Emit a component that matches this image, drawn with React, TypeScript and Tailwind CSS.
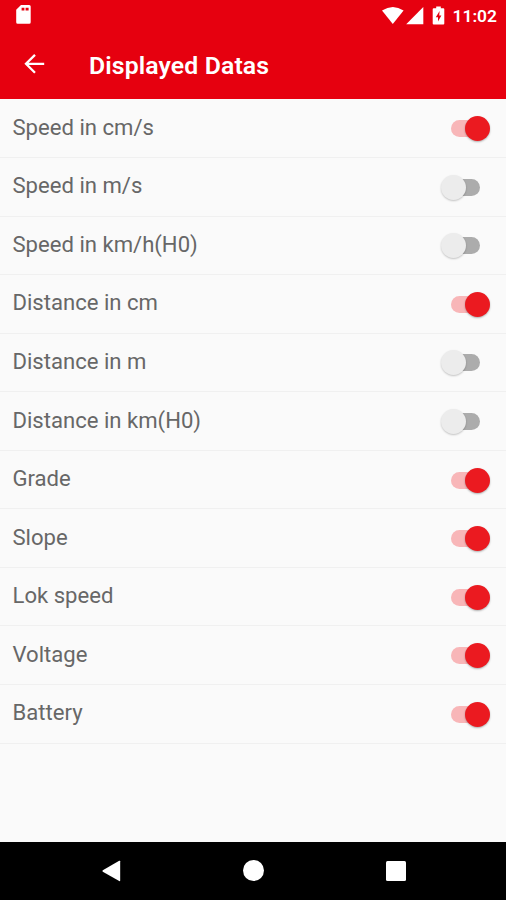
const rows: { label: string; on: boolean }[] = [
  { label: 'Speed in cm/s', on: true },
  { label: 'Speed in m/s', on: false },
  { label: 'Speed in km/h(H0)', on: false },
  { label: 'Distance in cm', on: true },
  { label: 'Distance in m', on: false },
  { label: 'Distance in km(H0)', on: false },
  { label: 'Grade', on: true },
  { label: 'Slope', on: true },
  { label: 'Lok speed', on: true },
  { label: 'Voltage', on: true },
  { label: 'Battery', on: true },
];

function Toggle({ on }: { on: boolean }) {
  return (
    <button role="switch" aria-checked={on} className="relative mt-px h-[25px] w-[50px] shrink-0">
      <span className={`absolute top-[4px] left-[11px] h-[17px] w-[28.5px] rounded-full ${on ? 'bg-[#f8b6b8]' : 'bg-[#acacac]'}`} />
      <span
        className={`absolute top-0 size-[25px] rounded-full ${
          on
            ? 'left-[25px] bg-[#eb1a20] shadow-[0_1px_2px_rgba(0,0,0,0.3)]'
            : 'left-px bg-[#ececec] shadow-[0_1px_2px_rgba(0,0,0,0.22)]'
        }`}
      />
    </button>
  );
}

function StatusBar() {
  return (
    <div className="flex h-[30px] items-center justify-between pt-[2px] pr-[9px] pl-[16px]">
      <svg width="15" height="19" viewBox="0 0 15 19" fill="#fff" className="-mt-[3px]">
        <path fillRule="evenodd" d="M5 0H13.2Q14.7 0 14.7 1.5V17.3Q14.7 18.8 13.2 18.8H1.7Q.2 18.8 .2 17.3V4.8ZM5.6 2.7V5.5H8.4V2.7ZM9.6 2.7V5.5H12.6V2.7Z" />
      </svg>
      <div className="flex items-center">
        <svg width="71" height="20" viewBox="0 0 71 20" className="-mt-px" fill="#fff">
          <path d="M0 4.4Q11 -2.6 21.6 4.4L10.8 17.9Z" />
          <path d="M41.3 .9V18.3H24.2Z" />
          <path fillRule="evenodd" d="M54.2 .4H58.8V2.2H61.3Q62.3 2.2 62.3 3.2V17.6Q62.3 18.6 61.3 18.6H51.7Q50.7 18.6 50.7 17.6V3.2Q50.7 2.2 51.7 2.2H54.2ZM57.6 5L53.8 11.2H56V15.6L59.4 9.5H57.2Z" />
        </svg>
        <span className="text-[17.4px] leading-5 font-semibold text-white">11:02</span>
      </div>
    </div>
  );
}

export default function App() {
  return (
    <div className="flex h-[900px] w-full flex-col overflow-hidden bg-[#fafafa] font-['Roboto',sans-serif]">
      <header className="h-[98.5px] shrink-0 bg-[#e6000f] text-white">
        <StatusBar />
        <div className="flex h-[68px] items-center pl-[23.5px]">
          <svg width="21" height="20" viewBox="0 0 21 20" fill="none" stroke="#fff" strokeWidth="2.3">
            <path d="M20.2 9.8H2.2M11 .9L2 9.8L11 18.7" />
          </svg>
          <h1 className="mt-[3px] ml-[44.5px] text-[24.8px] leading-[30px] font-semibold tracking-[0.12px]">Displayed Datas</h1>
        </div>
      </header>
      <main className="min-h-0 flex-1 pt-px">
        {rows.map((row) => (
          <div key={row.label} className="flex h-[58.55px] items-center justify-between border-b border-[#f0f0f0] pr-[16px] pl-[12.5px]">
            <span className="-mt-[3px] text-[22.1px] leading-[28px] text-[#676767]">{row.label}</span>
            <Toggle on={row.on} />
          </div>
        ))}
      </main>
      <nav className="flex h-[58.5px] shrink-0 items-center justify-between bg-black pr-[100px] pl-[101.5px]">
        <svg width="19" height="22" viewBox="0 0 19 22" fill="#fff">
          <path d="M17.2 .8Q18.2 .3 18.2 1.3V20.5Q18.2 21.5 17.2 21L.8 11.7Q0 11 .8 10.3Z" />
        </svg>
        <span className="size-[21px] rounded-full bg-white" />
        <span className="size-[20px] rounded-[1.5px] bg-white" />
      </nav>
    </div>
  );
}
